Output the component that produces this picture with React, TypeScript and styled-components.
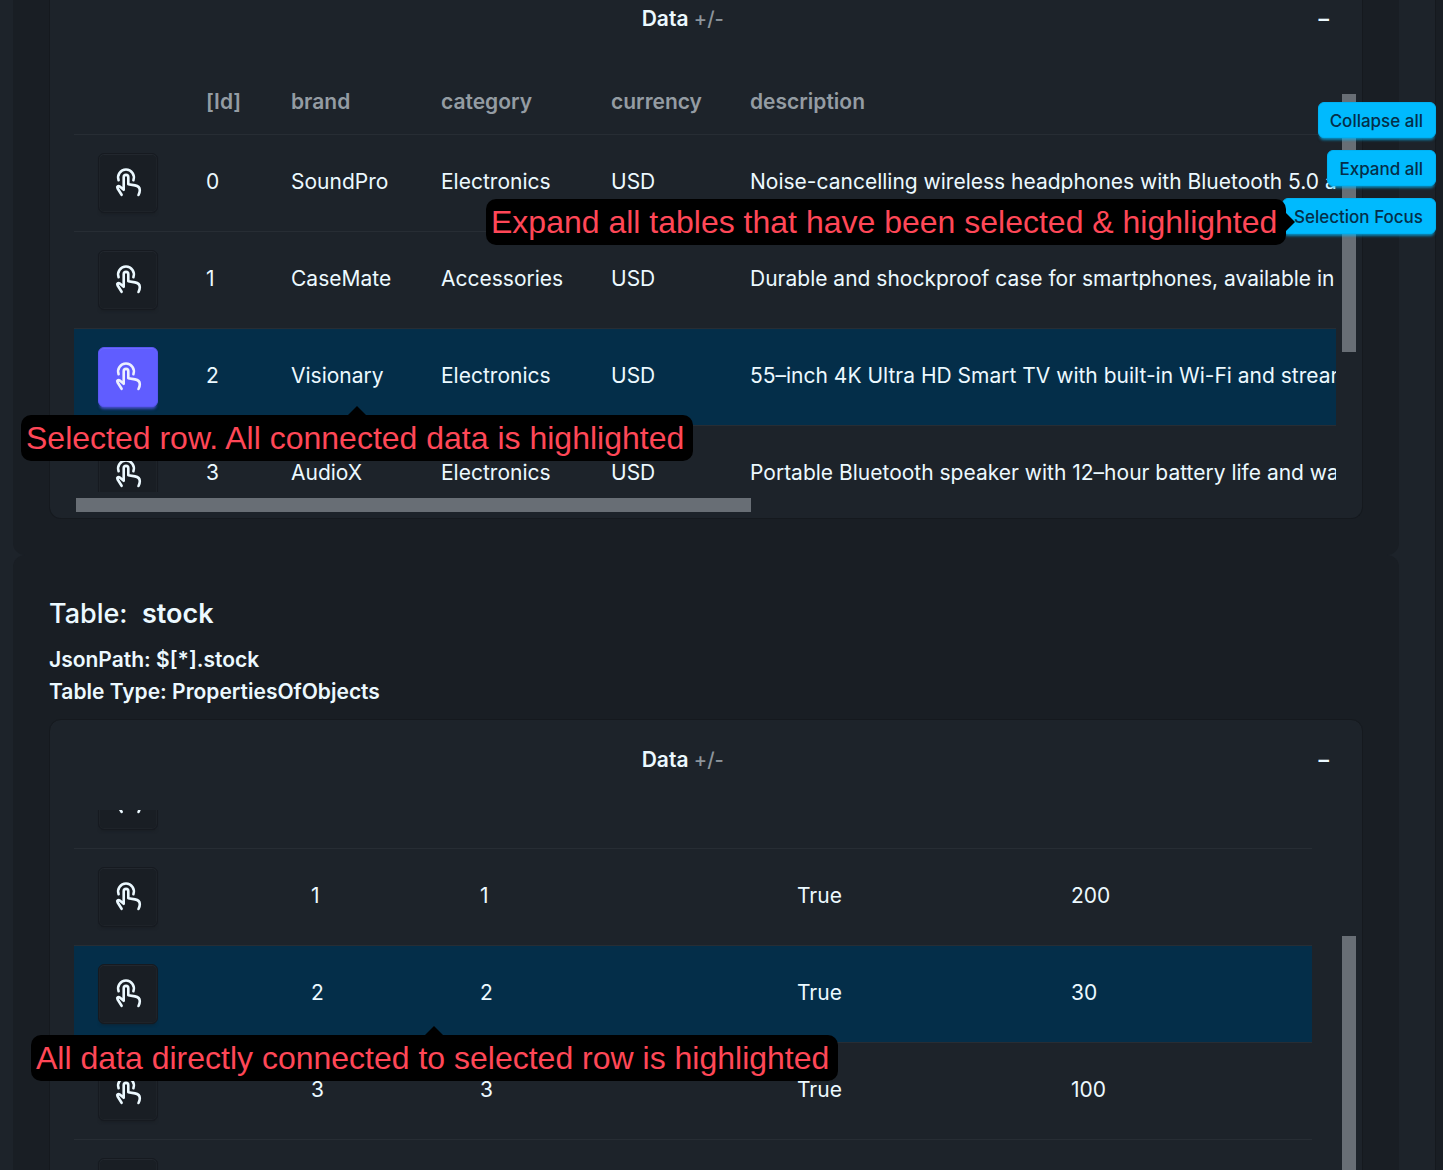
import React, { useCallback } from "react";
import styled, { createGlobalStyle, css } from "styled-components";

const GlobalStyle = createGlobalStyle`
  * { box-sizing: border-box; }
  body {
    margin: 0;
    background: #191e24;
    color: #ecf9ff;
    font-family: "Inter", "Noto Sans", sans-serif;
    font-size: 21px;
    line-height: 32px;
  }
`;

const Page = styled.main`
  position: relative;
  height: 100vh;
  overflow: hidden;
  padding-right: 7px;
`;

const Panel = styled.div`
  padding: 0 36px 0 13px;
  background: #1d232a;
  border-right: 1px solid #15191e;
`;

const Section = styled.section<{ $continued?: boolean }>`
  display: flex;
  flex-direction: column;
  padding: ${(p) => (p.$continued ? "0 36px 36px" : "36px")};
  background: #191e24;
  border-radius: ${(p) => (p.$continued ? "0 0 12px 12px" : "12px")};
`;

const Heading = styled.h2`
  margin: 0;
  padding-top: 1px;
  font-size: 27px;
  line-height: 44px;
  font-weight: 500;
  white-space: pre;

  strong { font-weight: 600; }
`;

const Meta = styled.div`
  padding: 8px 0 11px;
  font-weight: 600;
`;

const Card = styled.div<{ $continued?: boolean }>`
  background: #1d232a;
  border: 1px solid #15191e;
  border-radius: 12px;
  ${(p) =>
    p.$continued &&
    css`
      border-top: 0;
      border-top-left-radius: 0;
      border-top-right-radius: 0;
    `}
`;

const CollapseTitle = styled.button<{ $continued?: boolean }>`
  display: flex;
  align-items: flex-end;
  width: 100%;
  height: ${(p) => (p.$continued ? "69px" : "90px")};
  padding: 0 33px 34px 24px;
  border: 0;
  background: none;
  color: inherit;
  font: inherit;
  font-weight: 600;
  text-align: left;
`;

const TitleText = styled.span`
  flex: 1;
  padding-right: 27px;
  text-align: center;

  small {
    font-size: 20px;
    font-weight: 500;
    color: #8c949b;
  }
`;

const Body = styled.div`
  display: grid;
  grid-template-columns: minmax(0, 1fr) 14px;
  gap: 6px;
  padding: 0 6px 6px 24px;
`;

const Scroller = styled.div`
  height: 423px;
  overflow: auto;
  scrollbar-width: none;
`;

const VerticalThumb = styled.div<{ $start: number }>`
  height: 258px;
  margin-top: ${(p) => p.$start}px;
  background: #686e75;
`;

const HorizontalThumb = styled.div`
  width: 53.5%;
  height: 14px;
  margin-left: 2px;
  background: #686e75;
`;

const Table = styled.table<{ $width: string }>`
  width: ${(p) => p.$width};
  table-layout: fixed;
  border-collapse: separate;
  border-spacing: 0;
`;

const Column = styled.col<{ $width?: string }>`
  width: ${(p) => p.$width ?? "auto"};
`;

const HeadCell = styled.th`
  height: 66px;
  padding: 0 24px;
  border-bottom: 1px solid #272d34;
  color: #949ca3;
  font-weight: 600;
  text-align: left;
`;

const Row = styled.tr<{ $highlighted?: boolean }>`
  background: ${(p) => (p.$highlighted ? "#042e49" : "transparent")};
`;

const Cell = styled.td`
  height: 97px;
  padding: 0 24px 3px;
  border-bottom: 1px solid #272d34;
  white-space: nowrap;
`;

const ActionCell = styled(Cell)`
  padding: 18px 24px;
`;

const SelectButton = styled.button<{ $active?: boolean }>`
  display: flex;
  align-items: center;
  justify-content: center;
  width: 60px;
  height: 60px;
  padding: 0;
  border: 1px solid ${(p) => (p.$active ? "#5a57f2" : "#161a20")};
  border-radius: 6px;
  background: ${(p) => (p.$active ? "#605dff" : "#191e24")};
  color: ${(p) => (p.$active ? "#edf1fe" : "#ecf9ff")};
  box-shadow: ${(p) =>
    p.$active
      ? "inset 0 1px 0 #6d6aff, 0 3px 3px -2px #605dff80, 0 4px 3px -2px #605dff80"
      : "inset 0 1px 0 #22272e, inset 0 0 0 1px #1e2329, 0 3px 3px -2px #15191e80"};
`;

const Actions = styled.nav`
  position: absolute;
  top: 102px;
  right: 7px;
  display: flex;
  flex-direction: column;
  align-items: flex-end;
  gap: 12px;
`;

const ActionButton = styled.button`
  height: 36px;
  padding: 2px 12px 0 11px;
  border: 1px solid #00b1f2;
  border-radius: 6px;
  background: #00bafe;
  color: #042e49;
  font: 500 17px/24px "Inter", "Noto Sans", sans-serif;
  box-shadow: 0 3px 3px -2px #00bafe80, 0 4px 3px -2px #00bafe80;
`;

const Callout = styled.div<{ $left: number; $top: number; $arrow: "up" | "right"; $at?: number }>`
  position: absolute;
  left: ${(p) => p.$left}px;
  top: ${(p) => p.$top}px;
  padding: 0 9px 0 5px;
  border-radius: 10px;
  background: #000;
  color: #ff4757;
  font: 32px/46px "Liberation Sans", Arial, sans-serif;
  white-space: nowrap;

  &::after {
    content: "";
    position: absolute;
    border: 9px solid transparent;
    ${(p) =>
      p.$arrow === "up"
        ? css`
            bottom: 100%;
            left: ${p.$at}px;
            border-top: 0;
            border-bottom-color: #000;
          `
        : css`
            left: 100%;
            top: 14px;
            border-right: 0;
            border-left-color: #000;
          `}
  }
`;

function TouchIcon() {
  return (
    <svg
      width="30"
      height="30"
      viewBox="0 0 30 30"
      fill="none"
      stroke="currentColor"
      strokeWidth="2.6"
      strokeLinecap="round"
      strokeLinejoin="round"
      aria-hidden="true"
    >
      <path d="M5.6 12.2a7.9 7.900 0 1 1 14.800 0" />
      <path d="M8.600 26.800 4.500 20.200c-.9-1.600.7-2.800 2.300-1.600l3.900 3.200V9.200a2.300 2.300 0 0 1 4.600 0v7l6.700 1.200c3.400.6 4.800 2.200 4.800 4.800 0 1.700-.5 3.300-1.300 4.800" />
    </svg>
  );
}

interface TableRow {
  key: number;
  cells: string[];
  selected?: boolean;
  highlighted?: boolean;
}

interface DataTableProps {
  width: string;
  columns: (string | undefined)[];
  headers?: string[];
  rows: TableRow[];
  scrollTop?: number;
  thumbStart: number;
  continued?: boolean;
}

const products: TableRow[] = [
  { key: 0, cells: ["0", "SoundPro", "Electronics", "USD", "Noise-cancelling wireless headphones with Bluetooth 5.0 a"] },
  { key: 1, cells: ["1", "CaseMate", "Accessories", "USD", "Durable and shockproof case for smartphones, available in r"] },
  {
    key: 2,
    cells: ["2", "Visionary", "Electronics", "USD", "55–inch 4K Ultra HD Smart TV with built-in Wi-Fi and streamin"],
    selected: true,
    highlighted: true,
  },
  { key: 3, cells: ["3", "AudioX", "Electronics", "USD", "Portable Bluetooth speaker with 12–hour battery life and wat"] },
];

const stock: TableRow[] = [
  { key: 0, cells: ["", "", "", ""] },
  { key: 1, cells: ["1", "1", "True", "200"] },
  { key: 2, cells: ["2", "2", "True", "30"], highlighted: true },
  { key: 3, cells: ["3", "3", "True", "100"] },
  { key: 4, cells: ["", "", "", ""] },
  { key: 5, cells: ["", "", "", ""] },
];

function DataTable({ width, columns, headers, rows, scrollTop = 0, thumbStart, continued }: DataTableProps) {
  const restoreScroll = useCallback(
    (node: HTMLDivElement | null) => {
      if (node) node.scrollTop = scrollTop;
    },
    [scrollTop],
  );

  return (
    <Card $continued={continued}>
      <CollapseTitle type="button" aria-expanded="true" $continued={continued}>
        <TitleText>
          Data <small>+/-</small>
        </TitleText>
        <span>–</span>
      </CollapseTitle>
      <Body>
        <Scroller ref={restoreScroll}>
          <Table $width={width}>
            <colgroup>
              {columns.map((w, i) => (
                <Column key={i} $width={w} />
              ))}
            </colgroup>
            {headers && (
              <thead>
                <tr>
                  {headers.map((h, i) => (
                    <HeadCell key={i}>{h}</HeadCell>
                  ))}
                </tr>
              </thead>
            )}
            <tbody>
              {rows.map((row) => (
                <Row key={row.key} $highlighted={row.highlighted}>
                  <ActionCell>
                    <SelectButton type="button" aria-label={`Select row ${row.key}`} $active={row.selected}>
                      <TouchIcon />
                    </SelectButton>
                  </ActionCell>
                  {row.cells.map((c, i) => (
                    <Cell key={i}>{c}</Cell>
                  ))}
                </Row>
              ))}
            </tbody>
          </Table>
        </Scroller>
        <VerticalThumb $start={thumbStart} />
        <HorizontalThumb />
      </Body>
    </Card>
  );
}

export default function App() {
  return (
    <>
      <GlobalStyle />
      <Page>
        <Panel>
          <Section $continued>
            <DataTable
              continued
              width="2350px"
              columns={["108px", "85px", "150px", "170px", "139px", undefined]}
              headers={["", "[Id]", "brand", "category", "currency", "description"]}
              rows={products}
              thumbStart={25}
            />
          </Section>
          <Section>
            <Heading>
              Table:  <strong>stock</strong>
            </Heading>
            <Meta>
              <div>JsonPath: $[*].stock</div>
              <div>Table Type: PropertiesOfObjects</div>
            </Meta>
            <DataTable
              width="calc(100% - 24px)"
              columns={["213px", "169px", "317px", "274px", undefined]}
              rows={stock}
              scrollTop={58}
              thumbStart={126}
            />
          </Section>
        </Panel>
        <Actions>
          <ActionButton type="button">Collapse all</ActionButton>
          <ActionButton type="button">Expand all</ActionButton>
          <ActionButton type="button">Selection Focus</ActionButton>
        </Actions>
        <Callout $left={486} $top={199} $arrow="right">
          Expand all tables that have been selected &amp; highlighted
        </Callout>
        <Callout $left={21} $top={415} $arrow="up" $at={327}>
          Selected row. All connected data is highlighted
        </Callout>
        <Callout $left={31} $top={1035} $arrow="up" $at={394}>
          All data directly connected to selected row is highlighted
        </Callout>
      </Page>
    </>
  );
}
